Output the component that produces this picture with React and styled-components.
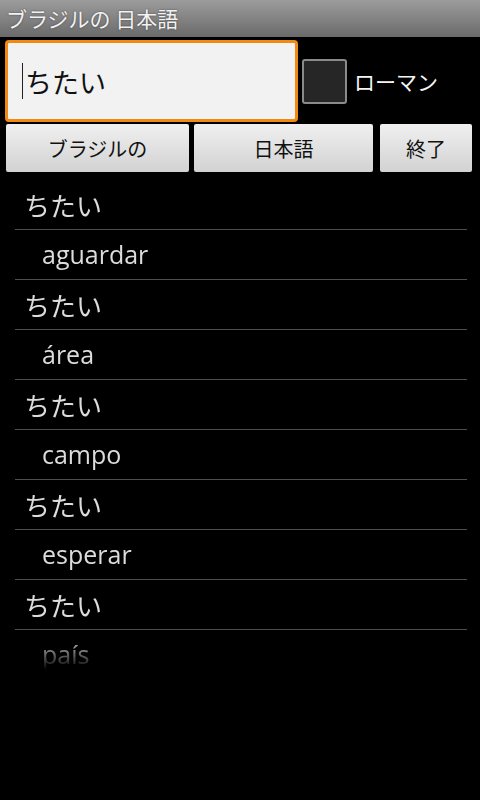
import React from "react";
import styled, { createGlobalStyle } from "styled-components";

const Global = createGlobalStyle`
  html, body { margin: 0; padding: 0; background: #000; }
  body { font-family: "Noto Sans CJK JP", "Open Sans", sans-serif; }
  * { box-sizing: border-box; }
`;

const Screen = styled.div`
  width: 480px;
  height: 800px;
  background: #000;
  overflow: hidden;
`;

const TitleBar = styled.div`
  height: 37px;
  display: flex;
  align-items: center;
  padding-left: 6px;
  background: linear-gradient(#9c9c9c, #6a6a6a);
  color: #f2f2f2;
  font-size: 21px;
  text-shadow: 0 0 2px rgba(0,0,0,0.5);
  white-space: pre;
  line-height: 1;
`;

const SearchRow = styled.div`
  display: flex;
  align-items: center;
  padding: 3px 0 0 5px;
`;

const InputBox = styled.div`
  width: 293px;
  height: 82px;
  border: 3px solid #f08a12;
  border-radius: 4px;
  background: #f2f2f2;
  display: flex;
  align-items: center;
  padding-left: 14px;
  color: #111;
  font-size: 27px;
  line-height: 1;
`;

const Cursor = styled.span`
  display: inline-block;
  width: 0;
  height: 36px;
  border-left: 1.5px solid #222;
  margin-right: 2px;
`;

const CheckBox = styled.div`
  width: 45px;
  height: 45px;
  margin-left: 4px;
  border: 2px solid #8a8a8a;
  border-radius: 3px;
  background: #262626;
`;

const CheckLabel = styled.span`
  margin-left: 7px;
  color: #f4f4f4;
  font-size: 21px;
`;

const ButtonRow = styled.div`
  display: flex;
  padding: 2px 0 0 6px;
`;

const Button = styled.div`
  width: ${(p) => p.$w}px;
  margin-right: ${(p) => p.$gap}px;
  height: 48px;
  border-radius: 2px;
  background: linear-gradient(#f0f0f0, #d2d2d2);
  display: flex;
  align-items: center;
  justify-content: center;
  color: #111;
  font-size: 20px;
`;

const List = styled.div`
  margin-top: 8px;
  height: 490px;
  overflow: hidden;
  padding: 0 13px 0 15px;
  -webkit-mask-image: linear-gradient(to bottom, #000 calc(100% - 34px), transparent);
  mask-image: linear-gradient(to bottom, #000 calc(100% - 34px), transparent);
`;

const Row = styled.div`
  height: 50px;
  border-bottom: 1px solid #4e4e4e;
  display: flex;
  align-items: center;
  padding-left: ${(p) => (p.$sub ? 27 : 9)}px;
  color: #dcdcdc;
  font-family: ${(p) =>
    p.$sub ? '"Open Sans", "Noto Sans", sans-serif' : '"Noto Sans CJK JP", sans-serif'};
  font-size: ${(p) => (p.$sub ? 25 : 26)}px;
  line-height: 1;
`;

const words = ["aguardar", "área", "campo", "esperar", "país"];

export default function App() {
  return (
    <Screen>
      <Global />
      <TitleBar>ブラジルの 日本語</TitleBar>
      <SearchRow>
        <InputBox>
          <Cursor />
          ちたい
        </InputBox>
        <CheckBox />
        <CheckLabel>ローマン</CheckLabel>
      </SearchRow>
      <ButtonRow>
        <Button $w={183} $gap={5}>ブラジルの</Button>
        <Button $w={179} $gap={7}>日本語</Button>
        <Button $w={92} $gap={0}>終了</Button>
      </ButtonRow>
      <List>
        {words.map((w) => (
          <React.Fragment key={w}>
            <Row>ちたい</Row>
            <Row $sub>{w}</Row>
          </React.Fragment>
        ))}
      </List>
    </Screen>
  );
}
